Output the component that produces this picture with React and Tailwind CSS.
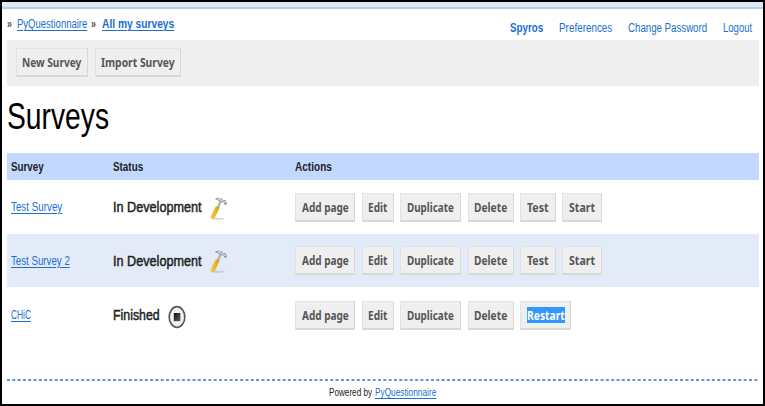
import { useLayoutEffect, useRef } from "react";

// Condenses a single line of text so that it fills exactly `w` pixels.
function Fit({ w, className = "", children }) {
  const ref = useRef(null);
  useLayoutEffect(() => {
    const el = ref.current;
    el.style.transform = `scaleX(${w / el.offsetWidth})`;
  }, [w]);
  return (
    <span className="block shrink-0 whitespace-nowrap" style={{ width: w }}>
      <span ref={ref} className={`inline-block origin-left ${className}`}>
        {children}
      </span>
    </span>
  );
}

const LINK = "text-[#1a6fd0] underline decoration-1 underline-offset-2";

function Button({ label, w, text, selected }) {
  return (
    <button
      className="flex h-[29px] shrink-0 items-center justify-center border border-t-[#e4e4e4] border-r-[#d8d8d8] border-b-2 border-b-[#d8d8d8] border-l-[#e2e2e2] bg-[#efefef] font-['Noto_Sans','Open_Sans',sans-serif] text-[13px] leading-[16px] font-bold text-[#555]"
      style={{ width: w }}
    >
      <Fit w={text} className={selected ? "bg-[#3297fd] text-white" : ""}>
        {label}
      </Fit>
    </button>
  );
}

function Hammer() {
  return (
    <svg className="mt-[3px]" width="18" height="24" viewBox="0 0 18 24">
      <defs>
        <linearGradient id="handle" x1="0" x2="1">
          <stop offset="0" stopColor="#fbd640" />
          <stop offset="1" stopColor="#dc9c08" />
        </linearGradient>
      </defs>
      <ellipse cx="8" cy="21.8" rx="6.5" ry="1.1" fill="#999" opacity="0.35" />
      <path d="M10.4 4.5 7.8 11" stroke="#b5b5b5" strokeWidth="2.4" />
      <path d="M6 9.4 9.3 10.7 4.4 21Q2.2 22.8.7 20.2Z" fill="url(#handle)" stroke="#d09a14" strokeWidth="0.4" />
      <path d="M4.8 2.2Q7.5-.3 11.3 1.4L13.2 3 15.2 3.1 17 6 15.8 8.2 14.2 7 13.8 5.4 11.5 5.3 9.2 4Q7.3 2.3 4.8 2.2Z" fill="#8c8c8c" />
      <path d="M7.5 1.8Q10 1.6 11.7 3.8L14 4.2 15.8 6.2" stroke="#e4e4e4" strokeWidth="1.2" fill="none" />
    </svg>
  );
}

function Stopped() {
  return (
    <svg className="mt-[3px]" width="18" height="24" viewBox="0 0 18 24">
      <defs>
        <linearGradient id="stop" x1="0" y1="0" x2="1" y2="1">
          <stop offset="0" stopColor="#111" />
          <stop offset="1" stopColor="#606060" />
        </linearGradient>
      </defs>
      <ellipse cx="9" cy="12" rx="7.8" ry="10.4" fill="#fff" stroke="#555" strokeWidth="1.7" />
      <ellipse cx="9" cy="12" rx="6.4" ry="9" fill="#f5f5f5" stroke="#ccc" strokeWidth="0.6" />
      <rect x="5.8" y="8" width="6.6" height="8.2" fill="url(#stop)" />
    </svg>
  );
}

const BASE = [
  ["Add page", 60, 47],
  ["Edit", 32, 19.5],
  ["Duplicate", 61, 47],
  ["Delete", 46, 33],
];
const OPEN = [...BASE, ["Test", 35.5, 22], ["Start", 39.5, 26]];

const ROWS = [
  { name: "Test Survey", w: 51, status: "In Development", sw: 89, icon: <Hammer />, bg: "h-[54px]", actions: OPEN },
  { name: "Test Survey 2", w: 59, status: "In Development", sw: 89, icon: <Hammer />, bg: "h-[53px] bg-[#e4ebf8]", actions: OPEN },
  { name: "CHiC", w: 20, status: "Finished", sw: 47, icon: <Stopped />, bg: "h-[56px]", actions: [...BASE, ["Restart", 51, 38, true]] },
];

const COLS = "grid grid-cols-[102px_182px_1fr] items-center pl-1";

export default function App() {
  return (
    <div className="flex h-[406px] w-[765px] flex-col border-2 border-black bg-white font-['Liberation_Sans',Arial,sans-serif] text-[12.5px] leading-[16px] text-[#222]">
      <div className="h-[7px] shrink-0 border-b-2 border-[#bccde2] bg-[#dce9f8]" />
      <div className="mr-1 ml-[5px] flex flex-1 flex-col">
        <header className="flex h-[31px] justify-between">
          <nav className="flex pt-[7px]">
            <Fit w={5} className="font-bold text-[#555]">»</Fit>
            <div className="w-[5px]" />
            <Fit w={70} className={LINK}>PyQuestionnaire</Fit>
            <div className="w-[4px]" />
            <Fit w={5} className="font-bold text-[#555]">»</Fit>
            <div className="w-[6px]" />
            <Fit w={72} className={`font-bold ${LINK}`}>All my surveys</Fit>
          </nav>
          <nav className="flex gap-4 pt-[11px] pr-[7px] text-[#1a6fd0]">
            <Fit w={33} className="font-bold">Spyros</Fit>
            <Fit w={53}>Preferences</Fit>
            <Fit w={79}>Change Password</Fit>
            <Fit w={29}>Logout</Fit>
          </nav>
        </header>
        <div className="flex h-[46px] gap-[7px] bg-[#efefef] pt-2 pl-[9px]">
          <Button label="New Survey" w={71.5} text={59} />
          <Button label="Import Survey" w={86.5} text={74} />
        </div>
        <h1 className="h-[67px] pt-[11px] text-[36px] leading-[40px] text-black">
          <Fit w={102}>Surveys</Fit>
        </h1>
        <div className={`${COLS} h-[27px] bg-[#c3d8ff] font-bold`}>
          <Fit w={33}>Survey</Fit>
          <Fit w={30}>Status</Fit>
          <Fit w={37}>Actions</Fit>
        </div>
        {ROWS.map((row) => (
          <div key={row.name} className={`${COLS} ${row.bg}`}>
            <Fit w={row.w} className={LINK}>{row.name}</Fit>
            <div className="flex items-center gap-2 text-[15.5px]">
              <Fit w={row.sw} className="[-webkit-text-stroke:0.5px_#222]">{row.status}</Fit>
              {row.icon}
            </div>
            <div className="flex gap-[6.5px]">
              {row.actions.map(([label, w, text, selected]) => (
                <Button key={label} label={label} w={w} text={text} selected={selected} />
              ))}
            </div>
          </div>
        ))}
        <footer className="mt-auto flex h-[25px] flex-col items-center">
          <svg className="block h-[2px] w-full shrink-0">
            <line x1="0" y1="1" x2="752" y2="1" stroke="#5d9adc" strokeWidth="2" strokeDasharray="3 2.3" />
          </svg>
          <div className="flex gap-[3px] pt-[3px] pr-[2px] text-[11px]">
            <Fit w={43}>Powered by</Fit>
            <Fit w={61} className={LINK}>PyQuestionnaire</Fit>
          </div>
        </footer>
      </div>
    </div>
  );
}
